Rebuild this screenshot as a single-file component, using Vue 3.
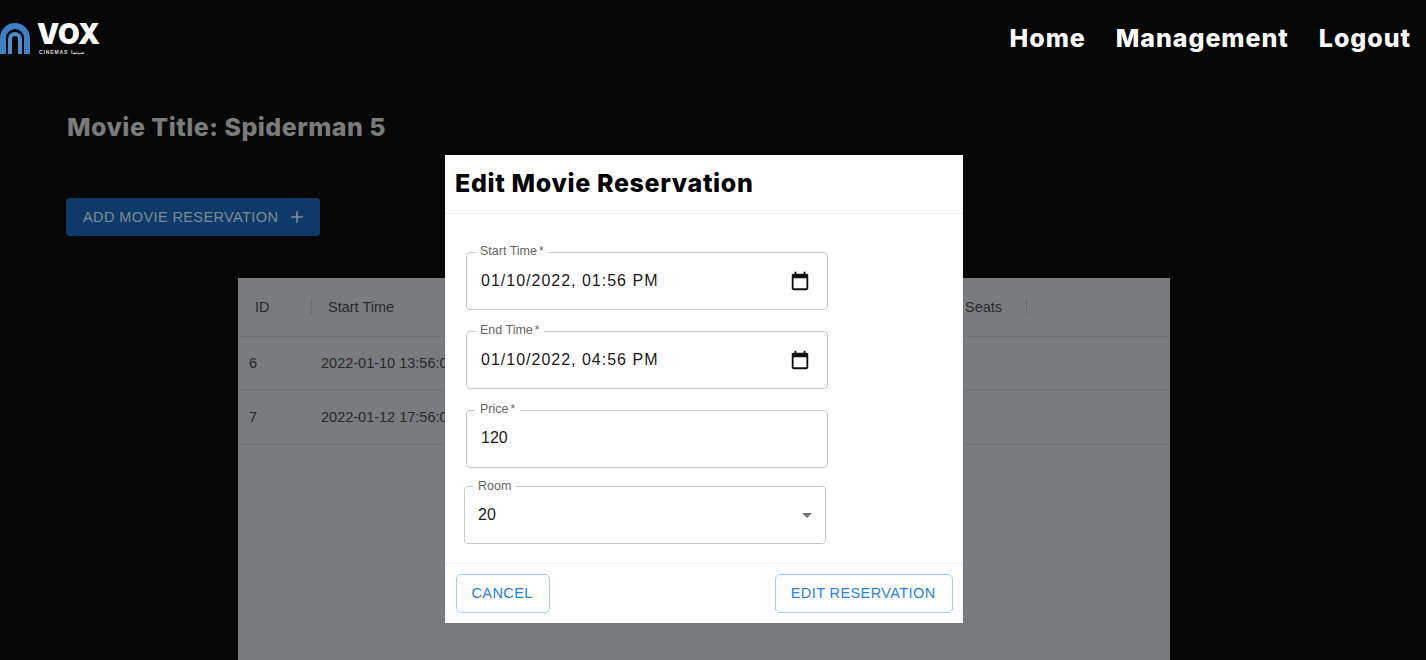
<script setup>
const fields = [
  { label: 'Start Time', value: '01/10/2022, 01:56 PM', date: true },
  { label: 'End Time', value: '01/10/2022, 04:56 PM', date: true },
  { label: 'Price', value: '120', date: false },
];
const rows = [
  { id: 6, start: '2022-01-10 13:56:00' },
  { id: 7, start: '2022-01-12 17:56:00' },
];
</script>

<template>
  <div class="page">
    <header class="nav">
      <div class="logo">
        <svg class="arches" viewBox="0 0 31 31" fill="none">
          <path d="M3 31V15a12 12 0 0 1 24 0V31" stroke="#3f7fc4" stroke-width="6"/>
          <path d="M10 31V16a5 5 0 0 1 10 0V31" stroke="#4f8ccb" stroke-width="4"/>
        </svg>
        <div class="wordmark">
          <span class="vox">VOX</span>
          <span class="cinemas">CINEMAS سينما</span>
        </div>
      </div>
      <nav class="links">
        <a>Home</a>
        <a>Management</a>
        <a>Logout</a>
      </nav>
    </header>

    <main class="content">
      <h2 class="movie-title">Movie Title: Spiderman 5</h2>
      <button class="add-btn">
        ADD MOVIE RESERVATION
        <svg viewBox="0 0 24 24" width="20" height="20" fill="currentColor"><path d="M19 13h-6v6h-2v-6H5v-2h6V5h2v6h6v2z"/></svg>
      </button>

      <section class="table">
        <div class="thead">
          <div class="th id">ID<i class="sep"></i></div>
          <div class="th start">Start Time</div>
          <div class="th seats">Seats<i class="sep"></i></div>
        </div>
        <div v-for="r in rows" :key="r.id" class="tr">
          <div class="td id">{{ r.id }}</div>
          <div class="td">{{ r.start }}</div>
        </div>
      </section>
    </main>

    <div class="modal">
      <h2 class="modal-title">Edit Movie Reservation</h2>
      <div class="modal-body">
        <div v-for="f in fields" :key="f.label" class="field">
          <span class="legend">{{ f.label }}<small>*</small></span>
          <span class="value" :class="{ date: f.date }">{{ f.value }}</span>
          <svg v-if="f.date" class="cal" viewBox="0 0 24 24" fill="#111"><path d="M19 4h-1V2h-2v2H8V2H6v2H5c-1.1 0-2 .9-2 2v14c0 1.1.9 2 2 2h14c1.1 0 2-.9 2-2V6c0-1.1-.9-2-2-2zm0 16H5V9h14v11z"/></svg>
        </div>
        <div class="field room">
          <span class="legend">Room</span>
          <span class="value">20</span>
          <i class="caret"></i>
        </div>
      </div>
      <div class="modal-foot">
        <button class="outline">CANCEL</button>
        <button class="outline">EDIT RESERVATION</button>
      </div>
    </div>
  </div>
</template>

<style>
html, body { margin: 0; background: #060606; overflow: hidden; }
</style>

<style scoped>
.page {
  height: 660px;
  overflow: hidden;
  position: relative;
  background: #060606;
  font-family: "Liberation Sans", Arial, sans-serif;
}
.nav {
  height: 76px;
  display: flex;
  justify-content: space-between;
  align-items: center;
  padding-right: 15px;
}
.logo { display: flex; align-items: flex-start; height: 34px; padding-top: 4px; }
.arches { width: 31px; height: 31px; }
.wordmark { display: flex; flex-direction: column; margin-left: 6px; color: #fff; }
.vox { font: 900 28px/22px Inter, sans-serif; letter-spacing: 0.1px; }
.cinemas { font: 700 5px/8px "Liberation Sans", sans-serif; letter-spacing: 0.9px; white-space: nowrap; margin: 3px 0 0 2px; color: #ddd; }
.links { display: flex; gap: 30px; }
.links a {
  color: #fff;
  font: 800 25px/30px Inter, sans-serif;
  letter-spacing: 0.95px;
}
.content { padding: 36px 0 0 66px; }
.movie-title {
  margin: 0;
  padding-left: 1px;
  color: #7b7b7b;
  font: 800 25px/30px Inter, sans-serif;
  letter-spacing: 0.45px;
}
.add-btn {
  display: flex;
  align-items: center;
  gap: 9px;
  margin-top: 56px;
  width: 254px;
  height: 38px;
  padding: 0 0 0 17px;
  border: none;
  border-radius: 4px;
  background: #0d3a69;
  color: #7f8a94;
  font: 14.5px "Liberation Sans", sans-serif;
  letter-spacing: 0.4px;
  white-space: nowrap;
}
.table {
  width: 932px;
  height: 400px;
  margin: 42px 0 0 172px;
  background: #797c7e;
  color: #26282a;
  font-size: 14.5px;
}
.thead, .tr {
  display: flex;
  align-items: center;
  border-bottom: 1px solid #6f7274;
  box-sizing: border-box;
}
.thead { height: 59px; }
.tr { height: 54px; padding-bottom: 2px; }
.th { position: relative; white-space: nowrap; box-sizing: border-box; }
.th.id { width: 74px; padding-left: 17px; }
.th.start { padding-left: 16px; width: 636px; }
.th.seats { padding-left: 17px; width: 79px; }
.sep {
  position: absolute;
  right: 0;
  top: 0;
  width: 1px;
  height: 15px;
  background: #6a6d6f;
}
.td { white-space: nowrap; }
.td.id { width: 83px; padding-left: 11px; box-sizing: border-box; }

.modal {
  position: absolute;
  left: 445px;
  top: 155px;
  width: 518px;
  height: 468px;
  background: #fff;
  display: flex;
  flex-direction: column;
  box-sizing: border-box;
}
.modal-title {
  margin: 0;
  height: 59px;
  box-sizing: border-box;
  padding: 13px 0 0 10px;
  border-bottom: 1px solid #ececec;
  color: #000;
  font: 800 25px/30px Inter, sans-serif;
  letter-spacing: 0.65px;
}
.modal-body {
  flex: 1;
  padding: 38px 0 0 21px;
  display: flex;
  flex-direction: column;
  gap: 21px;
  border-bottom: 1px solid #f0f0f0;
}
.field {
  position: relative;
  width: 362px;
  height: 58px;
  box-sizing: border-box;
  border: 1px solid #c8c8c8;
  border-radius: 4px;
  display: flex;
  align-items: center;
  justify-content: space-between;
  padding: 0 16px 0 14px;
}
.field.room { margin: -3px 0 0 -2px; padding-left: 13px; padding-right: 13px; }
.field.room .value { margin-top: -1px; }
.legend {
  position: absolute;
  left: 8px;
  top: -10px;
  padding: 0 5px;
  background: #fff;
  color: #666;
  font-size: 12.5px;
  line-height: 16px;
}
.field.room .legend { top: -9px; }
.legend small { font-size: 12px; margin-left: 2px; }
.value { color: #1b1b1b; font-size: 16px; margin-top: -3px; }
.value.date { letter-spacing: 1px; margin-top: -1px; }
.cal { width: 22px; height: 22px; }
.caret {
  width: 0;
  height: 0;
  border-left: 5px solid transparent;
  border-right: 5px solid transparent;
  border-top: 5px solid #757575;
}
.modal-foot {
  height: 59px;
  flex: none;
  display: flex;
  justify-content: space-between;
  padding: 10px 10px 0 11px;
  box-sizing: border-box;
}
.outline {
  height: 39px;
  padding: 0 16.5px 2px 14.5px;
  background: #fff;
  border: 1.5px solid #a8cdf3;
  border-radius: 5px;
  color: #2a80dc;
  font: 14.5px "Liberation Sans", sans-serif;
  letter-spacing: 0.4px;
}
</style>
